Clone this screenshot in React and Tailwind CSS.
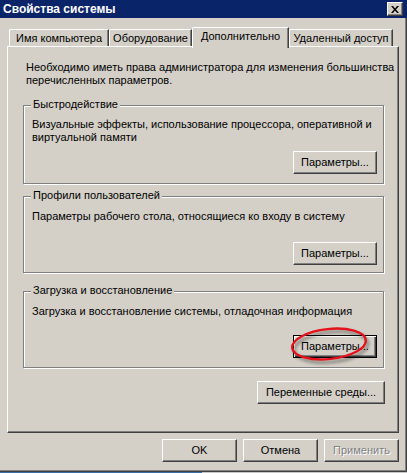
import React from 'react';

const FACE = 'bg-[#d4d0c8]';

function Btn({ children, className = '', isDefault = false, disabled = false }) {
  const frame = isDefault
    ? 'border border-black shadow-[inset_1px_1px_0_#fff,inset_-1px_-1px_0_#404040,inset_-2px_-2px_0_#808080]'
    : 'border border-t-white border-l-white border-r-[#404040] border-b-[#404040] shadow-[inset_-1px_-1px_0_#808080]';
  return (
    <div className={`flex h-[23px] items-center justify-center ${FACE} ${frame} ${className}`}>
      <span className={disabled ? 'text-[#808080] [text-shadow:1px_1px_0_#fff]' : 'text-black'}>{children}</span>
    </div>
  );
}

function Group({ title, text, className = '', children }) {
  return (
    <div className={`relative flex w-[361px] flex-col border border-[#808080] shadow-[inset_1px_1px_0_#fff,1px_1px_0_#fff] ${className}`}>
      {/* caption sits over the etched top line */}
      <span className={`absolute left-[7px] top-[-8px] px-[2px] leading-[13px] ${FACE}`}>{title}</span>
      <div className="pl-[8px] leading-[13px]">{text}</div>
      <div className="mt-auto flex justify-end pr-[6px]">{children}</div>
    </div>
  );
}

function Tab({ label, active, className = '' }) {
  return (
    <div
      className={
        active
          ? `relative z-10 mb-[-2px] flex h-[21px] items-start justify-center pt-[2px] ${FACE} border-t border-l border-white border-r border-r-[#404040] shadow-[inset_-1px_0_0_#808080] rounded-tl-[2px] ${className}`
          : `flex h-[17px] items-start justify-center pt-[2px] ${FACE} border-t border-l border-white border-r border-r-[#404040] shadow-[inset_-1px_0_0_#808080] rounded-tl-[2px] ${className}`
      }
    >
      <span className="leading-[13px]">{label}</span>
    </div>
  );
}

export default function App() {
  return (
    <div
      className={`relative flex h-[473px] w-[407px] flex-col overflow-hidden ${FACE} text-[11px] text-black`}
      style={{ fontFamily: '"Liberation Sans", Arial, sans-serif' }}
    >
      {/* title bar */}
      <div className="flex h-[18px] shrink-0 items-center justify-between bg-[#0a246a] pl-[3px] pr-[4px]">
        <span className="text-[12px] font-bold leading-[14px] text-white">Свойства системы</span>
        <div className={`flex h-[14px] w-[16px] items-center justify-center ${FACE} border border-t-white border-l-white border-r-[#404040] border-b-[#404040] shadow-[inset_-1px_-1px_0_#808080]`}>
          <svg width="8" height="7" viewBox="0 0 8 7">
            <path d="M0 0h2l2 2.5L6 0h2L5 3.5 8 7H6L4 4.5 2 7H0l3-3.5z" fill="#000" />
          </svg>
        </div>
      </div>

      {/* dialog body */}
      <div className="flex flex-1 flex-col border-r border-b border-[#404040] pl-[7px] pr-[5px] pt-[9px] shadow-[inset_-1px_-1px_0_#808080]">
        <div className="flex h-[19px] items-end pl-[2px]">
          <Tab label="Имя компьютера" className="w-[100px]" />
          <Tab label="Оборудование" className="w-[83px]" />
          <Tab label="Дополнительно" active className="w-[97px]" />
          <Tab label="Удаленный доступ" className="w-[104px]" />
        </div>

        <div className="flex h-[387px] w-[392px] flex-col border-t border-l border-white border-r border-b border-r-[#404040] border-b-[#404040] pl-[15px] pt-[14px] shadow-[inset_-1px_-1px_0_#808080]">
          <p className="pl-[3px] leading-[13px]">
            Необходимо иметь права администратора для изменения большинства
            <br />
            перечисленных параметров.
          </p>

          <Group
            title="Быстродействие"
            className="mt-[18px] h-[79px] pt-[12px] pb-[9px]"
            text={
              <>
                Визуальные эффекты, использование процессора, оперативной и
                <br />
                виртуальной памяти
              </>
            }
          >
            <Btn className="w-[84px]">Параметры...</Btn>
          </Group>

          <Group
            title="Профили пользователей"
            className="mt-[12px] h-[77px] pt-[13px] pb-[7px]"
            text="Параметры рабочего стола, относящиеся ко входу в систему"
          >
            <Btn className="w-[84px]">Параметры...</Btn>
          </Group>

          <Group
            title="Загрузка и восстановление"
            className="mt-[18px] h-[77px] pt-[13px] pb-[9px]"
            text="Загрузка и восстановление системы, отладочная информация"
          >
            <Btn isDefault className="w-[84px]">Параметры...</Btn>
          </Group>

          <div className="mt-[13px] flex w-[362px] justify-end">
            <Btn className="w-[128px]">Переменные среды...</Btn>
          </div>
        </div>

        <div className="mt-[6px] flex w-[392px] justify-end gap-[6px]">
          <Btn className="w-[75px]">OK</Btn>
          <Btn className="w-[75px]">Отмена</Btn>
          <Btn disabled className="w-[75px]">Применить</Btn>
        </div>
      </div>

      {/* desktop strip below the window */}
      <div className="flex h-[1px] shrink-0">
        <div className="w-[202px] bg-[#3a6ea5]" />
        <div className="flex-1 bg-[#c8c8c8]" />
      </div>

      {/* red marker drawn around the default button */}
      <svg className="pointer-events-none absolute left-[286px] top-[324px]" width="90" height="44" viewBox="0 0 90 44">
        <defs>
          <filter id="soft" x="-20%" y="-40%" width="140%" height="180%">
            <feGaussianBlur stdDeviation="1.6" />
          </filter>
        </defs>
        <ellipse cx="45" cy="23" rx="37" ry="15" transform="rotate(-6 45 23)" fill="none" stroke="#000" strokeOpacity="0.35" strokeWidth="3" filter="url(#soft)" />
        <ellipse cx="43" cy="20" rx="37" ry="15" transform="rotate(-6 43 20)" fill="none" stroke="#e3121b" strokeWidth="2.4" />
      </svg>
    </div>
  );
}
